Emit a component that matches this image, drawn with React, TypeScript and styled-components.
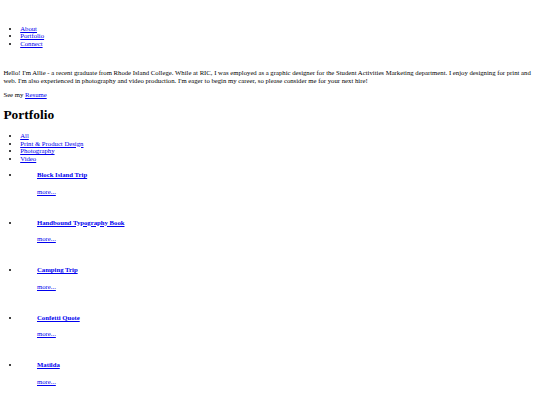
import styled, { createGlobalStyle } from "styled-components";

const GlobalStyle = createGlobalStyle`
  html, body {
    margin: 0;
    padding: 0;
    background: #fff;
  }
  body {
    font-family: "Liberation Serif", "Times New Roman", serif;
    font-size: 6.72px;
    line-height: 1.15;
    color: #000;
  }
`;

const Page = styled.div`
  padding: 0 3.4px;
`;

const Header = styled.header`
  padding-top: 24.5px;
`;

const NavList = styled.ul`
  margin: 0;
  padding-left: 16.8px;
  list-style: disc;
`;

const Link = styled.a`
  color: #0000ee;
  text-decoration: underline;
`;

const Intro = styled.p`
  margin: 21.5px 0 6.7px;
`;

const SeeMore = styled.p`
  margin: 0 0 7.7px;
`;

const Title = styled.h1`
  font-size: 13.44px;
  font-weight: bold;
  margin: 0 0 9.7px;
  line-height: 1.15;
`;

const FilterList = styled.ul`
  margin: 0 0 8.7px;
  padding-left: 16.8px;
  list-style: disc;
`;

const WorkList = styled.ul`
  margin: 0;
  padding-left: 16.8px;
  list-style: disc;
`;

const WorkItem = styled.li`
  padding-left: 16.8px;
  margin-bottom: 23.2px;
`;

const WorkTitle = styled.h4`
  font-size: 6.72px;
  font-weight: bold;
  margin: 0 0 8.8px;
  line-height: 1.15;
`;

const MoreText = styled.p`
  margin: 0;
`;

const filters = ["All", "Print & Product Design", "Photography", "Video"];
const works = [
  "Block Island Trip",
  "Handbound Typography Book",
  "Camping Trip",
  "Confetti Quote",
  "Matilda",
];

export default function App() {
  return (
    <>
      <GlobalStyle />
      <Page>
        <Header>
          <NavList>
            <li><Link href="#">About</Link></li>
            <li><Link href="#">Portfolio</Link></li>
            <li><Link href="#">Connect</Link></li>
          </NavList>
        </Header>
        <Intro>
          Hello! I'm Allie - a recent graduate from Rhode Island College. While at RIC, I was employed as a graphic designer for the Student Activities Marketing department. I enjoy designing for print and web. I'm also experienced in photography and video production. I'm eager to begin my career, so please consider me for your next hire!
        </Intro>
        <SeeMore>
          See my <Link href="#">Resume</Link>
        </SeeMore>
        <Title>Portfolio</Title>
        <FilterList>
          {filters.map((f) => (
            <li key={f}><Link href="#">{f}</Link></li>
          ))}
        </FilterList>
        <WorkList>
          {works.map((w) => (
            <WorkItem key={w}>
              <WorkTitle><Link href="#">{w}</Link></WorkTitle>
              <MoreText><Link href="#">more...</Link></MoreText>
            </WorkItem>
          ))}
        </WorkList>
      </Page>
    </>
  );
}
